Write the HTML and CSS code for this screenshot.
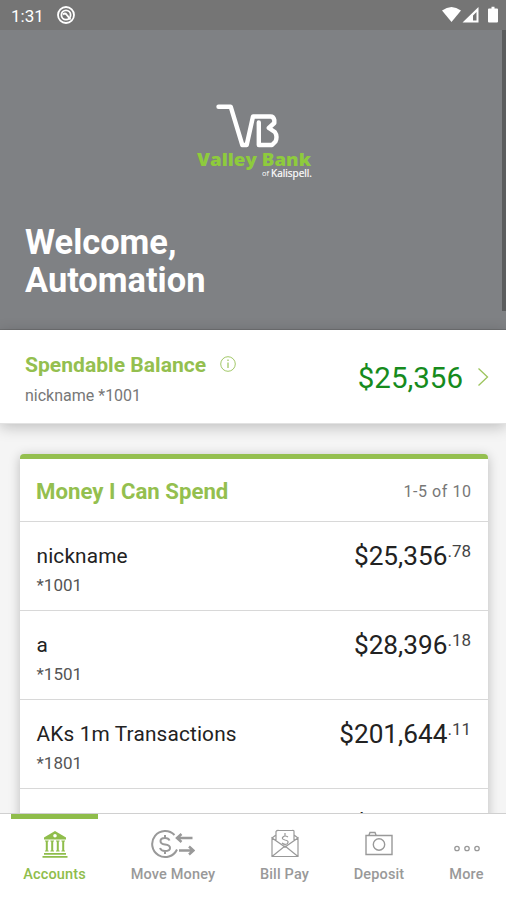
FILE: index.html
```html
<!DOCTYPE html>
<html lang="en">
<head>
<meta charset="utf-8">
<title>Valley Bank of Kalispell</title>
<link rel="stylesheet" href="styles.css">
</head>
<body>
<div class="app">
  <header class="status">
    <span class="time">1:31</span>
    <svg class="app-dot" width="18" height="18" viewBox="0 0 18 18" fill="none" stroke="#fff"><circle cx="9" cy="9" r="8" stroke-width="1.800"/><circle cx="9" cy="9" r="4.600" stroke-width="1.800"/><path d="M6 8.500q2-2 3.500 0l4 5" stroke-width="2"/></svg>
    <svg class="signals" width="56" height="18" viewBox="0 0 56 18" fill="#fff"><path d="M0 4.500Q9.500-2.500 19 4.500L9.500 16z"/><path fill-rule="evenodd" d="M20.500 16.500L36.500 1v15.500zM31 9.500v5h3.500V6z"/><path d="M47 2.500h2.500V.8h3v1.700H55a1 1 0 0 1 1 1v12a1 1 0 0 1-1 1h-8a1 1 0 0 1-1-1v-12a1 1 0 0 1 1-1z"/></svg>
  </header>
  <section class="hero">
    <svg class="logo" width="126" height="80" viewBox="0 0 126 80">
      <path d="M25.500 4.700h12.200l11.600 38.300h4.400L60 14.500h17.500q3 0 3.800 3.500v3l-5.500 5 6 4q3 4 .7 9.500l-3.500 3.500H65.800V20.500" fill="none" stroke="#fff" stroke-width="4.400" stroke-linejoin="round" stroke-linecap="round"/>
      <text class="brand" x="4" y="64" textLength="114" lengthAdjust="spacingAndGlyphs">Valley Bank</text>
      <text class="place-of" x="69" y="73.500" textLength="7" lengthAdjust="spacingAndGlyphs">of</text>
      <text class="place" x="78" y="74.500" textLength="41" lengthAdjust="spacingAndGlyphs">Kalispell.</text>
    </svg>
    <h1>Welcome,<br>Automation</h1>
    <span class="scrollbar"></span>
  </section>
  <section class="balance">
    <div class="balance-info">
      <h2>Spendable Balance <svg width="16" height="16" viewBox="0 0 16 16" fill="none" stroke="#a2c868"><circle cx="8" cy="8" r="7.300"/><path d="M8 6.500v5.500M8 3.500v1.500" stroke-width="1.300"/></svg></h2>
      <p>nickname *1001</p>
    </div>
    <span class="total">$25,356</span>
    <svg class="chevron" width="12" height="20" viewBox="0 0 12 20" fill="none" stroke="#9cc45c" stroke-width="1.300"><path d="M1.500 1.500L10.500 10l-9 8.500"/></svg>
  </section>
  <main class="content">
    <section class="card">
      <div class="card-head"><h2>Money I Can Spend</h2><span>1-5 of 10</span></div>
      <div class="row"><div><p class="name">nickname</p><p class="num">*1001</p></div><div class="amount">$25,356<sup>.78</sup></div></div>
      <div class="row"><div><p class="name">a</p><p class="num">*1501</p></div><div class="amount">$28,396<sup>.18</sup></div></div>
      <div class="row"><div><p class="name">AKs 1m Transactions</p><p class="num">*1801</p></div><div class="amount">$201,644<sup>.11</sup></div></div>
      <div class="row last"><div></div><div class="amount">$25,356<sup>.00</sup></div></div>
    </section>
  </main>
  <nav class="tabs">
    <a class="tab accounts"><svg width="28" height="30" viewBox="0 0 28 30" fill="#8fbd4b"><path fill-rule="evenodd" d="M14 2L25 8.500v2H3v-2zM14 5a1.800 1.800 0 1 0 0 3.600A1.800 1.800 0 0 0 14 5z"/><path d="M4 11.500h3.600v1H4zm5.400 0H13v1H9.400zm5.600 0h3.600v1H15zm5.400 0H24v1h-3.600zM4.800 12h2v10h-2zm5.400 0h2v10h-2zm5.600 0h2v10h-2zm5.400 0h2v10h-2zM4 21.500h3.600v1H4zm5.400 0H13v1H9.400zm5.600 0h3.600v1H15zm5.400 0H24v1h-3.600zM3 24h22v1.800H3zM1.500 27h25v1.800h-25z"/></svg><span>Accounts</span></a>
    <a class="tab"><svg width="44" height="30" viewBox="0 0 44 30" fill="none" stroke="#999" stroke-width="2"><path d="M23.500 6A13 13 0 1 0 26 20.500"/><path d="M18.500 11.500Q17.500 9 14 9q-4.500 0-4.500 3t4.500 3.500q5 .5 5 3.500t-5 3q-4 0-5-3M14 6v3M14 22v3"/><path d="M26 9h15.500M30.500 5L26 9l4.500 4M28 21.500h14.500M38 17.500l4.500 4-4.500 4" stroke-width="2.500"/></svg><span>Move Money</span></a>
    <a class="tab"><svg width="30" height="30" viewBox="0 0 30 30" fill="none" stroke="#999" stroke-width="1.200"><path d="M2 9v18.500h26V9L15 18zM2 27.500L15 17l13 10.500M2 9l4-3M28 9l-4-3M6 11V2.500q1-1.500 3-1h13q2-.5 2 1V11"/><path d="M18 8q-3-2-5 0t2 3q5 1 2 4-3 1-5-1M15 4v3"/></svg><span>Bill Pay</span></a>
    <a class="tab"><svg width="30" height="30" viewBox="0 0 30 30" fill="none" stroke="#999" stroke-width="1.400"><path d="M2 6.500h26v19H2zM5 6l1-2.500h5L12 6"/><circle cx="15" cy="15.500" r="5.700"/></svg><span>Deposit</span></a>
    <a class="tab"><svg width="30" height="30" viewBox="0 0 30 30" fill="none" stroke="#999" stroke-width="1.300"><circle cx="5" cy="19.500" r="2.200"/><circle cx="15" cy="19.500" r="2.200"/><circle cx="25" cy="19.500" r="2.200"/></svg><span>More</span></a>
  </nav>
</div>
</body>
</html>
```
FILE: styles.css
```css
* { box-sizing: border-box; }
body { margin: 0; font-family: Roboto, "Liberation Sans", sans-serif; color: #222; }
h1, h2, p { margin: 0; }
svg { display: block; flex: none; }
.app { width: 506px; height: 900px; display: flex; flex-direction: column; overflow: hidden; background: #f5f5f5; }
.status { height: 30px; flex: none; background: #757575; display: flex; align-items: center; padding: 0 8px 0 11px; }
.time { color: #fff; font-size: 17px; width: 46px; line-height: 30px; padding-top: 1px; }
.signals { margin-left: auto; }
.hero { height: 300px; flex: none; background: #7f8184; position: relative; padding: 72px 25px 0; border-bottom: 1px solid #707173; }
.logo { margin-left: 168px; }
.brand { font: 800 18px "Open Sans", Roboto, sans-serif; fill: #8ecb3d; }
.place-of { font: 8px "Open Sans", sans-serif; fill: #fff; }
.place { font: 10px "Open Sans", sans-serif; fill: #fff; stroke: #fff; stroke-width: .2px; }
h1 { color: #fff; font-size: 34.400px; line-height: 38px; font-weight: 700; margin-top: 41px; }
.scrollbar { position: absolute; top: 0; right: 0; width: 4px; height: 281px; background: #5c5d5e; }
.balance { height: 94px; flex: none; background: #fff; display: flex; align-items: center; padding: 0 17px 0 25px; box-shadow: 0 3px 14px rgba(0,0,0,.23); position: relative; border-bottom: 1px solid #e2e2e2; }
.balance-info { flex: 1; padding-top: 3px; }
h2 { color: #94bf4f; font-size: 22.200px; line-height: 28px; font-weight: 700; }
.balance h2 { font-size: 21.100px; display: flex; align-items: center; gap: 14px; }
.balance h2 svg { margin-top: -2px; }
.balance p { font-size: 16px; line-height: 20px; color: #777; margin-top: 7px; }
.total { color: #168b1d; font-size: 29.500px; line-height: 34px; padding-top: 3px; margin-right: 14px; }
.content { flex: 1; min-height: 0; overflow: hidden; padding: 30px 18px 0 20px; }
.card { height: 500px; background: #fff; border-top: 5px solid #94bf4f; border-radius: 4px 4px 0 0; box-shadow: 0 2px 12px rgba(0,0,0,.24); }
.card-head { height: 63px; display: flex; align-items: center; justify-content: space-between; padding: 2px 16.500px 0 16px; border-bottom: 1px solid #d8d8d8; }
.card-head span { color: #777; font-size: 16px; letter-spacing: .55px; }
.row { height: 89px; display: flex; justify-content: space-between; padding: 20px 17px 0 16.500px; border-bottom: 1px solid #d8d8d8; }
.name { font-size: 20.800px; line-height: 28px; letter-spacing: .16px; }
.num { color: #555; font-size: 17px; line-height: 22px; margin-top: 4px; }
.amount { font-size: 26.200px; line-height: 30px; display: flex; margin-top: -1px; }
.last .amount { margin-top: 1px; }
.amount sup { font-size: 17px; line-height: 20px; color: #444; vertical-align: top; }
.tabs { height: 87px; flex: none; background: #fff; border-top: 1px solid #d0d0d0; display: grid; grid-template-columns: 11px 87px 150px 73px 116px 59px; position: relative; }
.tab { display: flex; flex-direction: column; align-items: center; color: #999; font-size: 14.500px; line-height: 18px; padding-top: 15px; }
.tab span { margin-top: 7px; white-space: nowrap; font-weight: 500; letter-spacing: .15px; }
.accounts { grid-column: 2; border-top: 5px solid #8fbd4b; color: #8fbd4b; padding-top: 10px; }
```
